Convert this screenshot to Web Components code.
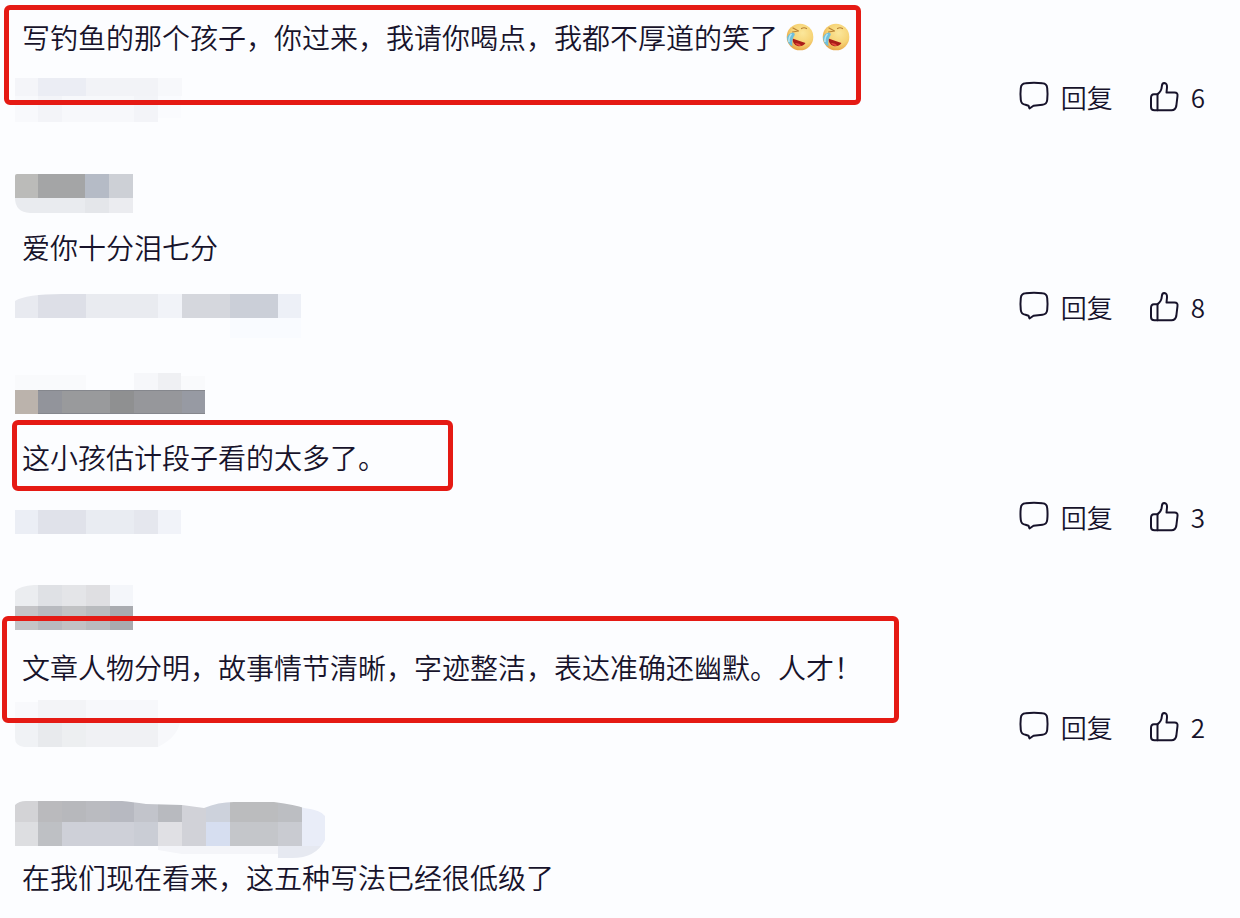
<!DOCTYPE html>
<html lang="zh-CN">
<head>
<meta charset="utf-8">
<meta name="viewport" content="width=device-width, initial-scale=1">
<title>评论</title>
<style>
  body {
    margin: 0;
    background: #fcfdff;
    color: #17132b;
    font-family: "Noto Sans CJK SC", "Noto Sans", sans-serif;
  }
</style>
</head>
<body>
<comment-list>
  <user-comment likes="6" frame="first">
    写钓鱼的那个孩子，你过来，我请你喝点，我都不厚道的笑了<laugh-emoji></laugh-emoji><laugh-emoji></laugh-emoji>
    <pixel-mask slot="meta" name="meta1"></pixel-mask>
  </user-comment>
  <user-comment likes="8">
    <pixel-mask slot="name" name="name2"></pixel-mask>
    爱你十分泪七分
    <pixel-mask slot="meta" name="meta2"></pixel-mask>
  </user-comment>
  <user-comment likes="3" frame="short">
    <pixel-mask slot="name" name="name3"></pixel-mask>
    这小孩估计段子看的太多了。
    <pixel-mask slot="meta" name="meta3"></pixel-mask>
  </user-comment>
  <user-comment likes="2" frame="long">
    <pixel-mask slot="name" name="name4"></pixel-mask>
    文章人物分明，故事情节清晰，字迹整洁，表达准确还幽默。人才！
    <pixel-mask slot="meta" name="meta4"></pixel-mask>
  </user-comment>
  <user-comment>
    <pixel-mask slot="name" name="name5"></pixel-mask>
    在我们现在看来，这五种写法已经很低级了
  </user-comment>
</comment-list>

<script>
class CommentList extends HTMLElement {
  constructor() {
    super();
    this.attachShadow({ mode: 'open' }).innerHTML = `
      <style>
        :host { display: block; padding: 18px 35px 20px 14px; }
        main { display: flex; flex-direction: column; }
      </style>
      <main><slot></slot></main>`;
  }
}

class LaughEmoji extends HTMLElement {
  constructor() {
    super();
    this.attachShadow({ mode: 'open' }).innerHTML = `
      <style>
        :host { display: inline-block; width: 28px; height: 28px; margin-left: 8px; }
        svg { display: block; }
      </style>
      <svg width="28" height="28" viewBox="0 0 28 28" role="img" aria-label="笑哭">
        <defs>
          <radialGradient id="g" cx=".6" cy=".35" r=".65">
            <stop offset="0" stop-color="#fbe79b"/><stop offset=".65" stop-color="#f6d273"/><stop offset="1" stop-color="#e9a848"/>
          </radialGradient>
        </defs>
        <circle cx="14" cy="14" r="13.3" fill="url(#g)"/>
        <path d="M7 5 12.500 8 6.500 9M15.500 5.500q2.500-1.500 5 0" fill="none" stroke="#b98335" stroke-width="1.200" stroke-linecap="round" stroke-linejoin="round"/>
        <path d="M6.500 15.500Q12 17.500 19.500 20Q16.500 24 11.500 23Q6.500 21.500 6.500 15.500Z" fill="#a91c18"/>
        <path d="M9 20q4-.5 6.500 2.500-4 1.500-6.500-2.500Z" fill="#e4483c"/>
        <path d="M6.500 9.500Q10.500 10 7.500 14Q5.500 18 6.500 23.500Q1 20.500 1 14.500Q2.500 10.500 6.500 9.500Z" fill="#6fbfdc"/>
        <path d="M5.500 11q-3 3-2.500 8" fill="none" stroke="#b6e6f2" stroke-width="1.500"/>
      </svg>`;
  }
}

/* Rectangles are [x, y, width, height, colour], inside the mask's own box. */
const MASKS = {
  meta1: { w: 170, h: 66, r: [
    [1,20,23,18,'#f4f5f9'],[24,20,48,18,'#ebedf4'],[72,20,72,18,'#f2f3f7'],[144,20,24,18,'#f7f8fb'],
    [1,38,23,26,'#f8f9fc'],[24,38,24,26,'#f3f4f8'],[48,38,72,26,'#f7f8fb'],[120,38,24,26,'#f3f4f8'],[144,38,23,22,'#fafbfe']] },
  name2: { w: 120, h: 56, clip: 'M1 18Q1 16 3 16H119V55H16Q1 54 1 40Z', r: [
    [1,16,23,24,'#bbbbb9'],[24,16,47,24,'#a4a5a6'],[71,16,24,24,'#b5bbc6'],[95,16,24,24,'#cdd0d6'],
    [1,40,70,15,'#e9ebef'],[71,40,24,15,'#e4e6ea'],[95,40,24,15,'#ebecf0']] },
  meta2: { w: 288, h: 70, clip: 'M1 33Q12 26 48 26H287V70H200V50H1Z', r: [
    [1,26,23,24,'#e8eaf0'],[24,26,48,24,'#dddfe7'],[72,26,72,24,'#e9ebf0'],[144,26,24,24,'#f1f3f8'],
    [168,26,48,24,'#d5d7dd'],[216,26,48,24,'#cbcfd8'],[264,26,23,24,'#edf0f7'],[216,50,71,20,'#f9fbff']] },
  name3: { w: 194, h: 46, r: [
    [1,7,71,15,'#f9fafc'],[120,5,24,17,'#f6f7fa'],[144,5,23,17,'#eff0f3'],[167,8,24,14,'#f9fafc'],
    [1,22,23,24,'#bbb3ac'],[24,22,24,24,'#92949b'],[48,22,48,24,'#999a9c'],[96,22,24,24,'#8f9091'],[120,22,48,24,'#96979b'],[168,22,23,24,'#979aa3'],
    [24,22,167,1,'#85878d'],[24,45,167,1,'#85878d']] },
  meta3: { w: 168, h: 56, r: [
    [1,32,23,24,'#ebeef5'],[24,32,48,24,'#e0e2ea'],[72,32,48,24,'#e9ecf2'],[120,32,24,24,'#e5e7ee'],[144,32,23,24,'#f1f3f9']] },
  name4: { w: 120, h: 52, clip: 'M1 13Q6 8 20 7H119V52H1Z', r: [
    [1,7,23,21,'#ebedf0'],[24,7,24,21,'#dfe1e5'],[48,7,24,21,'#e4e5e8'],[72,7,24,21,'#dfdfe2'],[96,7,23,21,'#f4f6fa'],
    [1,28,23,24,'#c4c4c7'],[24,28,24,24,'#b8babf'],[48,28,24,24,'#c1c2c4'],[72,28,24,24,'#b9bbbe'],[96,28,23,24,'#a9abb0']] },
  meta4: { w: 170, h: 60, clip: 'M1 12H145Q158 13 165 20Q172 45 144 59H10Q1 58 1 50Z', r: [
    [1,14,23,18,'#f8f9fc'],[24,12,48,20,'#f3f4f7'],[72,12,72,20,'#f7f8fb'],
    [1,32,23,27,'#f0f2f5'],[24,32,24,27,'#e8eaed'],[48,32,24,27,'#edeff1'],[72,32,72,27,'#f0f1f4'],[144,32,24,27,'#f7f8fb']] },
  name5: { w: 312, h: 72, clip: 'M1 17Q5 13 12 13H108Q118 14 132 16L168 17 190 20Q204 14 220 14H260Q282 17 290 20Q307 22 311 28V52Q302 70 278 70H264V66H168L144 62H120L96 58H1Z', r: [
    [1,13,23,21,'#d3d3d6'],[24,13,24,21,'#bababd'],[48,13,24,21,'#b7b8bc'],[72,13,24,21,'#babbc0'],[96,13,24,21,'#b7b9c1'],[120,13,24,21,'#c2c4cb'],[144,13,24,21,'#b8babf'],[168,13,24,45,'#d1d2d8'],[192,13,24,21,'#cdd2dc'],[216,13,48,21,'#bbbcbe'],[264,13,24,21,'#bcbec2'],
    [1,34,23,24,'#dddee1'],[24,34,24,24,'#bec0c4'],[48,34,72,24,'#ced0d8'],[120,34,24,24,'#cacdd5'],[144,34,24,24,'#e0e0e4'],[192,34,24,24,'#d6def0'],[216,34,48,24,'#c4c6ca'],[264,34,24,24,'#c9cbd1'],[288,13,23,45,'#e9edf8'],
    [144,58,120,8,'#f4f5f9'],[264,58,47,12,'#e6e9f1']] },
};

class PixelMask extends HTMLElement {
  constructor() {
    super();
    const m = MASKS[this.getAttribute('name')];
    const rects = m.r.map(([x, y, w, h, c]) => `<rect x="${x}" y="${y}" width="${w}" height="${h}" fill="${c}"/>`).join('');
    const clip = m.clip ? `<clipPath id="c"><path d="${m.clip}"/></clipPath>` : '';
    this.attachShadow({ mode: 'open' }).innerHTML = `
      <style>:host { display: block; } svg { display: block; }</style>
      <svg width="${m.w}" height="${m.h}" viewBox="0 0 ${m.w} ${m.h}" shape-rendering="crispEdges" aria-hidden="true">
        ${clip}<g${m.clip ? ' clip-path="url(#c)"' : ''}>${rects}</g>
      </svg>`;
  }
}

class CommentActions extends HTMLElement {
  constructor() {
    super();
    this.attachShadow({ mode: 'open' }).innerHTML = `
      <style>
        :host { display: flex; align-items: center; gap: 36px; height: 78px; }
        button {
          display: flex; align-items: center; gap: 12px;
          padding: 0; border: 0; background: none; color: inherit;
          font: 26px/40px "Noto Sans CJK SC", "Noto Sans", sans-serif;
          font-weight: 350; cursor: pointer;
        }
        svg { display: block; fill: none; stroke: currentColor; stroke-width: 2; stroke-linejoin: round; stroke-linecap: round; }
      </style>
      <button type="button">
        <svg width="30" height="32" viewBox="0 0 30 32" aria-hidden="true">
          <path d="M6.500 2.300Q15 1.300 23.500 2.300Q27.800 2.700 28.200 7Q28.900 13 28.200 19Q27.800 23.300 23.500 23.700L14.500 24.700 10.500 27.500 9.500 24.700 6.500 23.700Q2.200 23.300 1.800 19Q1.100 13 1.800 7Q2.200 2.700 6.500 2.300Z"/>
        </svg>
        <span>回复</span>
      </button>
      <button type="button" aria-label="赞 ${this.getAttribute('likes')}">
        <svg width="30" height="32" viewBox="0 0 30 32" aria-hidden="true">
          <path d="M8.500 13.200Q12.500 10.500 12.800 5.500Q13 2 15.200 2Q18.300 2.200 18 6.500L17.500 11.500H25.500Q29 11.500 28.500 15L27.300 25Q26.500 29 22.500 29.300H5.500Q2 29.300 2 26V17Q2 13.200 5 13.200Z"/>
          <path d="M8.500 13.200V29.300"/>
        </svg>
        <span>${this.getAttribute('likes')}</span>
      </button>`;
  }
}

class UserComment extends HTMLElement {
  constructor() {
    super();
    const likes = this.getAttribute('likes');
    this.attachShadow({ mode: 'open' }).innerHTML = `
      <style>
        :host { display: block; position: relative; }
        .name { height: 70px; }
        p { margin: 0; padding: 0 8px 2px; font-size: 28px; line-height: 38px; font-weight: 350; }
        ::slotted(laugh-emoji) { vertical-align: -2px; }
        .meta { display: flex; justify-content: space-between; align-items: flex-start; height: 100px; }
        .frame { position: absolute; box-sizing: border-box; border: 5px solid #e51a14; border-radius: 6px; pointer-events: none; }
        .first { left: -10px; top: -13px; width: 857px; height: 100px; }
        .short { left: -2px; top: 52px; width: 441px; height: 71px; }
        .long { left: -12px; top: 38px; width: 897px; height: 107px; }
      </style>
      <article>
        ${this.querySelector('[slot=name]') ? '<div class="name"><slot name="name"></slot></div>' : ''}
        <p><slot></slot></p>
        ${likes ? `<div class="meta"><slot name="meta"></slot><comment-actions likes="${likes}"></comment-actions></div>` : ''}
      </article>
      ${this.hasAttribute('frame') ? `<div class="frame ${this.getAttribute('frame')}"></div>` : ''}`;
  }
}

customElements.define('comment-list', CommentList);
customElements.define('laugh-emoji', LaughEmoji);
customElements.define('pixel-mask', PixelMask);
customElements.define('comment-actions', CommentActions);
customElements.define('user-comment', UserComment);
</script>
</body>
</html>
